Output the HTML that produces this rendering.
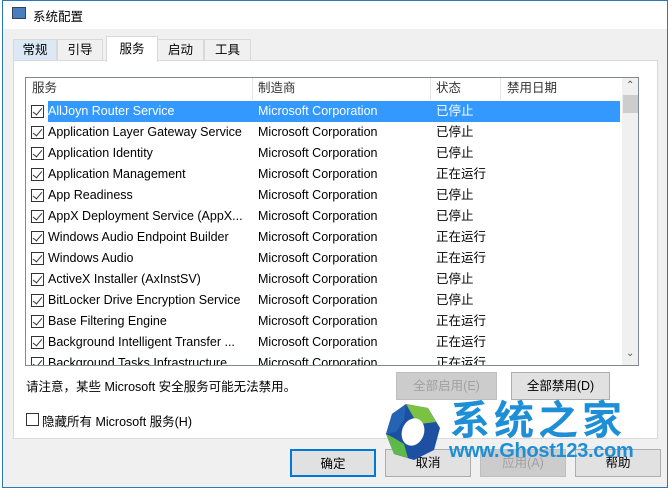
<!DOCTYPE html><html><head><meta charset="utf-8"><style>
*{box-sizing:border-box;margin:0;padding:0}
body{width:669px;height:489px;overflow:hidden;background:#fff;font-family:"Liberation Sans","Noto Sans CJK SC",sans-serif;font-size:12.5px;color:#000;position:relative}
.a{position:absolute}
.win{left:2px;top:0;width:666px;height:488px;border:1px solid #2b79b6;background:#f0f0f0}
.title{left:3px;top:1px;width:664px;height:28px;background:#fff}
.tab{top:39px;height:22px;border:1px solid #d9d9d9;border-bottom:none;background:#f0f0f0;text-align:center;line-height:21px}
.panel{left:13px;top:60px;width:645px;height:379px;background:#fff;border:1px solid #d9d9d9}
.list{left:25px;top:77px;width:614px;height:289px;border:1px solid #828790;background:#fff;overflow:hidden}
.row{position:absolute;left:0;height:21px;width:596px;line-height:21px;white-space:nowrap}
.row span{position:absolute}
.cb{position:absolute;left:5px;top:4px;width:13px;height:13px;border:1px solid #333;background:#fff}
.cb:after{content:"";position:absolute;left:3px;top:0px;width:4px;height:8px;border:solid #333;border-width:0 1.5px 1.5px 0;transform:rotate(40deg)}
.btn{height:28px;border:1px solid #adadad;background:#e1e1e1;text-align:center;line-height:26px}
.dis{color:#a0a0a0;border-color:#bfbfbf;background:#cccccc}
</style></head><body>
<div class="a win"></div>
<div class="a title"></div>
<div class="a" style="left:12px;top:7px;width:14px;height:12px;background:#4a7fbf;border:1px solid #345"></div>
<div class="a" style="left:33px;top:6px">系统配置</div>
<div class="a tab" style="left:13px;width:44px;background:#dce8f5">常规</div>
<div class="a tab" style="left:57px;width:46px">引导</div>
<div class="a tab" style="left:157px;width:47px">启动</div>
<div class="a tab" style="left:204px;width:47px">工具</div>
<div class="a panel"></div>
<div class="a tab" style="left:106px;top:36px;height:26px;width:52px;background:#fff;line-height:24px;z-index:2">服务</div>
<div class="a list">
<div class="row" style="top:0;height:22px;color:#333"><span style="left:6px">服务</span><span style="left:232px">制造商</span><span style="left:410px">状态</span><span style="left:481px">禁用日期</span>
<div style="position:absolute;left:226px;top:0;width:1px;height:22px;background:#e5e5e5"></div><div style="position:absolute;left:404px;top:0;width:1px;height:22px;background:#e5e5e5"></div><div style="position:absolute;left:474px;top:0;width:1px;height:22px;background:#e5e5e5"></div></div>
<div class="row" style="top:23px;background:#3399ff;color:#fff;left:22px;width:572px"></div>
<div id="rows"></div>
<div style="position:absolute;left:596px;top:0;width:17px;height:287px;background:#f0f0f0"></div>
<div style="position:absolute;left:597px;top:17px;width:15px;height:18px;background:#cdcdcd"></div>
<div style="position:absolute;left:600px;top:2px;font-size:10px;color:#555">&#8963;</div>
<div style="position:absolute;left:600px;top:270px;font-size:10px;color:#555">&#8964;</div>
</div>
<div class="a" style="left:26px;top:376px">请注意，某些 Microsoft 安全服务可能无法禁用。</div>
<div class="a btn dis" style="left:396px;top:372px;width:101px">全部启用(E)</div>
<div class="a btn" style="left:511px;top:372px;width:99px">全部禁用(D)</div>
<div class="a" style="left:26px;top:413px;width:13px;height:13px;border:1px solid #333;background:#fff"></div>
<div class="a" style="left:42px;top:411px">隐藏所有 Microsoft 服务(H)</div>
<div class="a btn" style="left:290px;top:449px;width:86px;border:2px solid #0078d7">确定</div>
<div class="a btn" style="left:385px;top:449px;width:86px">取消</div>
<div class="a btn dis" style="left:480px;top:449px;width:86px">应用(A)</div>
<div class="a btn" style="left:575px;top:449px;width:86px">帮助</div>
<svg class="a" style="left:384px;top:402px" width="58" height="60" viewBox="0 0 58 60"><path d="M22 2 L44 6 L56 26 L50 48 L30 58 L10 52 L2 32 L8 12Z" fill="#1d4fa3"/><path d="M22 2 L44 6 L52 20 L36 22 L30 16Z" fill="#7cc242"/><path d="M2 32 L10 52 L24 56 L20 42 L10 36Z" fill="#5fb84a"/><path d="M8 12 L22 2 L20 18 L12 30 L2 32Z" fill="#2563b5"/><ellipse cx="29" cy="30" rx="11" ry="14" transform="rotate(20 29 30)" fill="#fff"/></svg>
<div class="a" style="left:450px;top:394px;font-size:40px;color:#1e8fd6;font-weight:bold;letter-spacing:4px;font-family:'Noto Sans CJK SC',sans-serif;line-height:46px">系统之家</div>
<div class="a" style="left:449px;top:440px;font-size:20px;color:#1e8fd6;font-weight:bold;letter-spacing:-0.3px">www.Ghost123.com</div>
<script>
var d=[["AllJoyn Router Service","已停止"],["Application Layer Gateway Service","已停止"],["Application Identity","已停止"],["Application Management","正在运行"],["App Readiness","已停止"],["AppX Deployment Service (AppX...","已停止"],["Windows Audio Endpoint Builder","正在运行"],["Windows Audio","正在运行"],["ActiveX Installer (AxInstSV)","已停止"],["BitLocker Drive Encryption Service","已停止"],["Base Filtering Engine","正在运行"],["Background Intelligent Transfer ...","正在运行"],["Background Tasks Infrastructure ...","正在运行"]];
var h="";d.forEach(function(r,i){var c=i==0?"color:#fff;":"";h+='<div class="row" style="top:'+(23+i*21)+'px;'+c+'"><div class="cb"></div><span style="left:22px;width:200px;overflow:hidden">'+r[0]+'</span><span style="left:232px">Microsoft Corporation</span><span style="left:410px">'+r[1]+'</span></div>';});
document.getElementById("rows").innerHTML=h;
</script>
</body></html>
